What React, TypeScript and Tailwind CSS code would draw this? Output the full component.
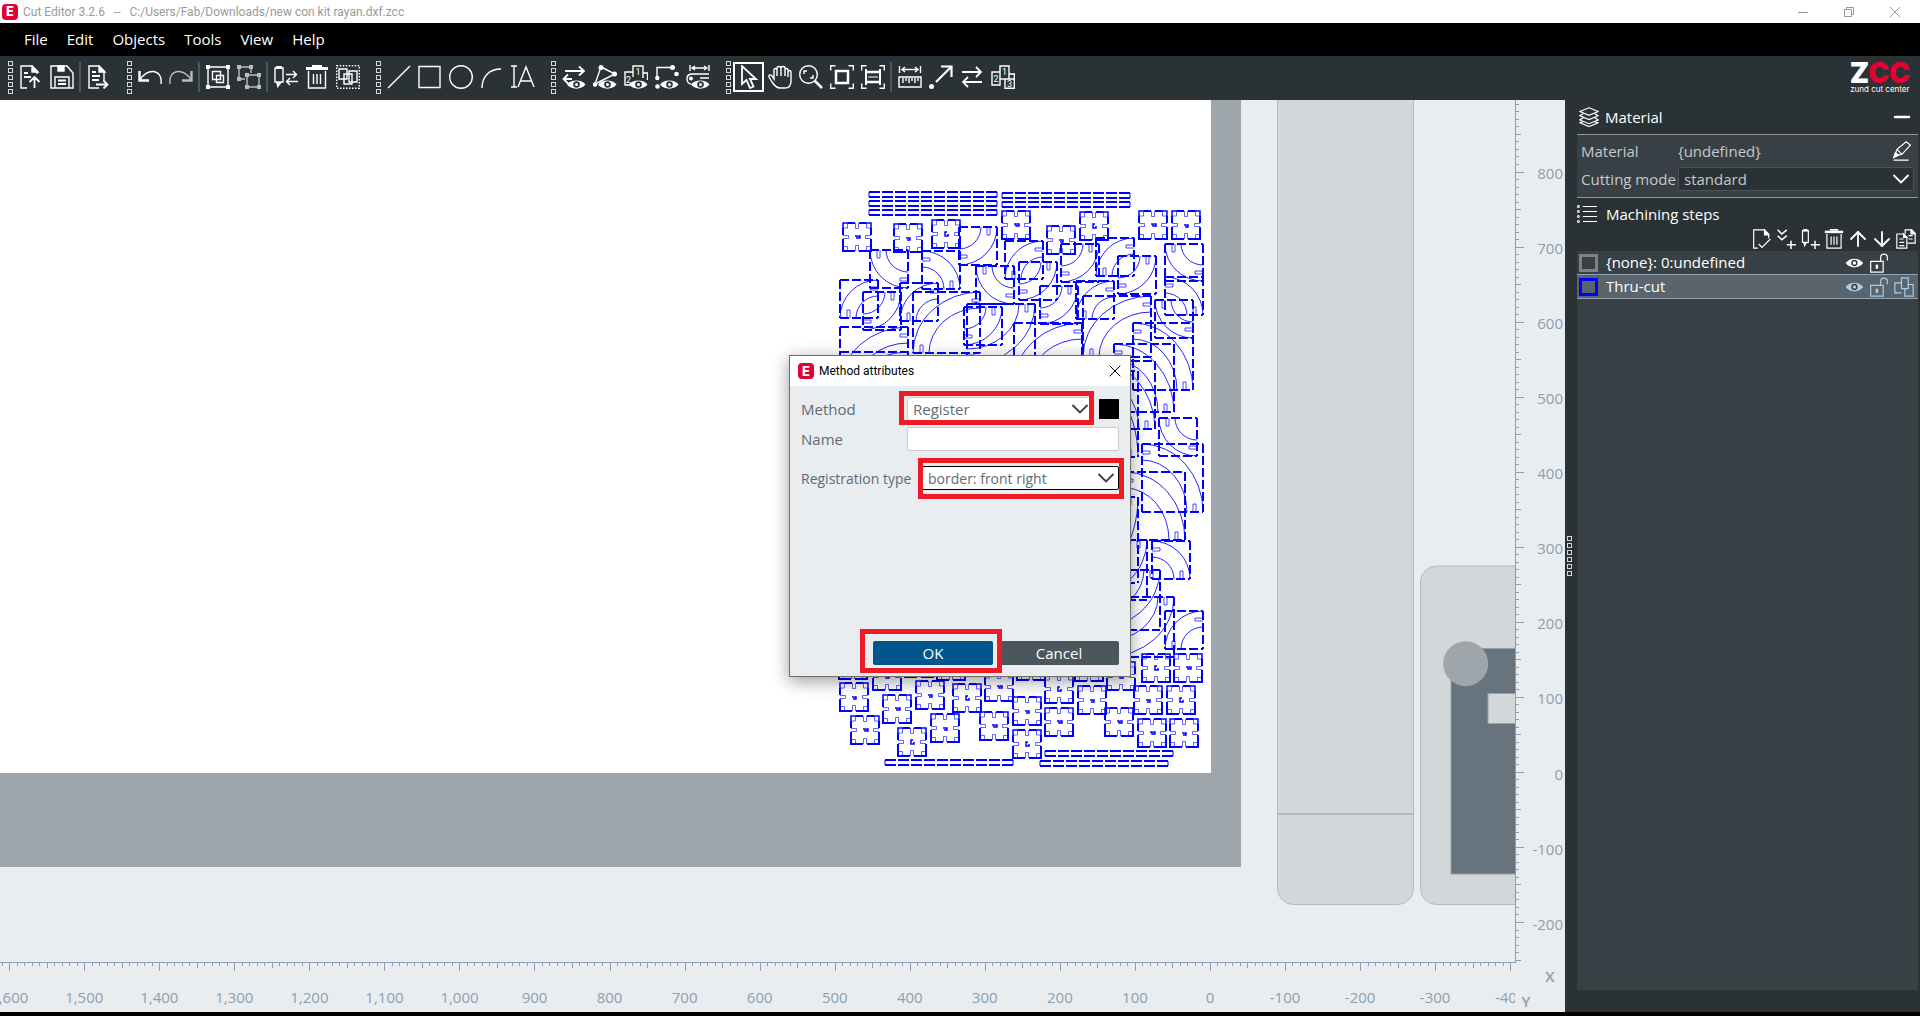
import React from 'react';
import { Minus, X, ArrowUp, ArrowDown } from 'lucide-react';

const BLUE = '#0000ff';

// ---------- icons ----------

interface IconProps {
  children: React.ReactNode;
  className?: string;
}

const Icon = ({ children, className = 'size-6' }: IconProps) => (
  <svg viewBox="0 0 24 24" className={className} fill="none" stroke="currentColor" strokeWidth={1.4} aria-hidden="true">
    {children}
  </svg>
);

const Chevron = ({ className }: { className: string }) => (
  <Icon className={`pointer-events-none absolute top-0 right-0 size-6 ${className}`}>
    <path d="M3.500 8L11 15.500L18.500 8" strokeWidth={1.8} />
  </Icon>
);

const Eye = () => (
  <g>
    <path d="M5 19.500C8.500 14 20 14 23.500 19.500C20 25 8.500 25 5 19.500Z" fill="currentColor" stroke="none" />
    <circle cx="14.500" cy="19.500" r="3.300" fill="#2b3235" stroke="none" />
    <circle cx="14.500" cy="19.500" r="1.500" fill="currentColor" stroke="none" />
  </g>
);

const Corners = () => <path d="M.700 5.500V.700H5.500M18.500 .700H23.300V5.500M23.300 18.500V23.300H18.500M5.500 23.300H.700V18.500" />;

const Trash = () => (
  <>
    <path d="M1 3.500H23" strokeWidth={3} />
    <path d="M7 1H17" strokeWidth={2} />
    <path d="M3.500 6V23H20.500V6" />
    <path d="M8.500 9V19M12 9V19M15.500 9V19" />
  </>
);

const icons = {
  open: (
    <>
      <path d="M8 23H2V1H13L18 6V9" />
      <path d="M13 1V7H19Z" fill="currentColor" />
      <path d="M5 8H9M5 12H12M15.500 23V12M10.500 17L15.500 12L20.500 17" strokeWidth={1.8} />
    </>
  ),
  save: (
    <>
      <path d="M1 1H17L23 8V23H1Z" />
      <path d="M8 1H14V6H8Z" fill="currentColor" />
      <path d="M5 23V12H19V23" />
      <path d="M8 15.500H16M8 19H16" strokeWidth={2} />
    </>
  ),
  exportDoc: (
    <>
      <path d="M12 23H2V1H12L17 6V16" />
      <path d="M12 1V7H18Z" fill="currentColor" />
      <path d="M5 7H9M5 11H13M5 15H12" strokeWidth={1.8} />
      <path d="M9 19.500H20M16.500 15.500L20.500 19.500L16.500 23.500" strokeWidth={1.8} />
    </>
  ),
  undo: (
    <>
      <path d="M2 15C8 3 25 3 23 19" />
      <path d="M1.500 6V15.500H11" strokeWidth={2.4} />
    </>
  ),
  redo: (
    <g stroke="#b9bec0">
      <path d="M22 15C16 3 -1 3 1 19" />
      <path d="M22.500 6V15.500H13" strokeWidth={2.4} />
    </g>
  ),
  group: (
    <>
      <path d="M2 2H22V22H2Z" />
      <path d="M0 0H4V4H0ZM20 0H24V4H20ZM0 20H4V24H0ZM20 20H24V24H20Z" fill="currentColor" stroke="none" />
      <path d="M6.500 6.500H14.500V14.500H6.500ZM10.500 10.500H17.500V17.500H10.500Z" />
    </>
  ),
  ungroup: (
    <g stroke="#b9bec0">
      <path d="M8 14H2V2H14V8M10 10H22V22H10Z" />
      <path d="M0 0H4V4H0ZM12 0H16V4H12ZM0 12H4V16H0ZM8 8H12V12H8ZM20 8H24V12H20ZM8 20H12V24H8ZM20 20H24V24H20Z" fill="#b9bec0" stroke="none" />
    </g>
  ),
  penSwap: (
    <>
      <path d="M1 3H9V17H1Z" />
      <path d="M2 1H8V4H2ZM2 17L3.500 23L8 17Z" fill="currentColor" stroke="none" />
      <path d="M12 9.500H22M19 6L22.500 9.500L19 13M24 16.500H13M16 13L12.500 16.500L16 20" />
    </>
  ),
  trash: <Trash />,
  select: (
    <>
      <path d="M.700 .700H23.300V23.300H.700Z" strokeDasharray="1.500 1.500" />
      <path d="M3 4H11V14H3ZM13 6H21V17H13ZM8 9H16V19H8Z" />
    </>
  ),
  line: <path d="M1 23L23 1" />,
  rect: <path d="M1 1.500H22V22.500H1Z" />,
  circle: <circle cx="12" cy="12" r="11.300" />,
  arc: <path d="M2 23C2 13 8 4 21 4" />,
  text: (
    <>
      <path d="M0 1H6M3 1V22M0 22H6" />
      <path d="M7 22L15 2L23 22M10 16H20" />
    </>
  ),
  viewDirection: (
    <>
      <path d="M3 6H22M17 1.500L22 6L17 10.500M10 14H2M6 9.500L1.500 14L6 18.500" strokeWidth={1.800} />
      <Eye />
    </>
  ),
  viewPoints: (
    <>
      <path d="M8 2L22 9L2 19Z" />
      <circle cx="8" cy="2.500" r="2.500" fill="currentColor" stroke="none" />
      <circle cx="21.500" cy="9" r="2.500" fill="currentColor" stroke="none" />
      <circle cx="2" cy="19.500" r="2.300" fill="currentColor" stroke="none" />
      <Eye />
    </>
  ),
  viewOrder: (
    <>
      <path d="M6 20H1V7H9M9 12V1H19V13M19 8H23.500V15" />
      <text x="2" y="18" fontSize="9" fill="currentColor" stroke="none" fontFamily="Roboto">2</text>
      <text x="11.500" y="10" fontSize="9" fill="currentColor" stroke="none" fontFamily="Roboto">1</text>
      <Eye />
    </>
  ),
  viewNodes: (
    <>
      <path d="M2 12V2.500H16" />
      <circle cx="2.300" cy="13" r="2.200" fill="currentColor" stroke="none" />
      <circle cx="17.500" cy="2.500" r="2.500" fill="currentColor" stroke="none" />
      <circle cx="21.500" cy="9" r="2.300" fill="currentColor" stroke="none" />
      <circle cx="2.500" cy="21.500" r="2.300" fill="currentColor" stroke="none" />
      <Eye />
    </>
  ),
  viewOffset: (
    <>
      <path d="M4 0V6M23 0V6M6 3H21M9 1L6 3L9 5M18 1L21 3L18 5" />
      <path d="M23 9H6C-1 9 0 18 5 19M14 13H23" />
      <circle cx="5" cy="13.500" r="2" fill="currentColor" stroke="none" />
      <Eye />
    </>
  ),
  pointer: <path d="M5 1V19L9.500 15L13 23L16.500 21.500L13 14H19Z" strokeWidth={1.800} />,
  hand: (
    <path d="M6 14V5C6 3 9 3 9 5V11V3C9 1 13 1 13 3V11V3C13 1 17 1 17 3V11V5C17 3 20 3 20 5V12V7C20 5 23 5 23 7V16C23 21 20 23 17 23H12C8 23 6 20 4 17L1 12C0 10 3 9 4 11Z" />
  ),
  magnifier: (
    <>
      <circle cx="9.500" cy="9.500" r="8.800" />
      <path d="M5 9V6H8M11 13H14V10" />
      <path d="M16 16L23 23" strokeWidth={2.500} />
    </>
  ),
  fitSheet: (
    <>
      <Corners />
      <path d="M6 6H18V18H6Z" strokeWidth={2.500} />
    </>
  ),
  fitWidth: (
    <>
      <Corners />
      <path d="M5 4V20M19 4V20" strokeWidth={2} />
      <path d="M5 7H19M5 17H19" strokeWidth={2.500} />
      <path d="M7 12H17" strokeWidth={1} />
    </>
  ),
  measure: (
    <>
      <path d="M1.500 1V8M22.500 1V8M4 4.500H20M7 2L4 4.500L7 7M17 2L20 4.500L17 7" />
      <path d="M1 12H23V22H1ZM5 13V18M8 13V16M11 13V18M14 13V16M17 13V18M20 13V16" />
    </>
  ),
  arrow: (
    <>
      <path d="M7 17L22 2M12 1.500H22.500V12" strokeWidth={2.200} />
      <circle cx="2.500" cy="21.500" r="2.500" fill="currentColor" stroke="none" />
    </>
  ),
  swap: <path d="M2 7H21M16 2L21 7L16 12M22 17H3M8 12L3 17L8 22" strokeWidth={1.800} />,
  order: (
    <>
      <path d="M9 20H1V7H9ZM9 1H18V14H9ZM14 14H23.300V23.300H14ZM18 9H23.300V14" />
      <text x="2.500" y="17" fontSize="9" fill="currentColor" stroke="none" fontFamily="Roboto">2</text>
      <text x="11" y="10" fontSize="9" fill="currentColor" stroke="none" fontFamily="Roboto">1</text>
      <text x="16" y="22" fontSize="9" fill="currentColor" stroke="none" fontFamily="Roboto">3</text>
    </>
  ),
};

type IconName = keyof typeof icons;
type ToolItem = IconName | 'grip' | 'sep';

const toolbar: ToolItem[] = [
  'grip', 'open', 'save', 'sep', 'exportDoc',
  'grip', 'undo', 'redo', 'sep', 'group', 'ungroup', 'sep', 'penSwap', 'trash', 'select',
  'grip', 'line', 'rect', 'circle', 'arc', 'text',
  'grip', 'viewDirection', 'viewPoints', 'viewOrder', 'viewNodes', 'viewOffset',
  'grip', 'pointer', 'hand', 'magnifier', 'fitSheet', 'fitWidth', 'sep', 'measure', 'arrow', 'swap', 'order',
];

const Grip = ({ count }: { count: number }) => (
  <span className="flex flex-col gap-[2px]">
    {Array.from({ length: count }, (_, i) => (
      <span key={i} className="h-[5px] w-[5px] border border-[#d5d8da]" />
    ))}
  </span>
);

const AppBadge = () => (
  <span className="flex size-4 items-center justify-center rounded-sm bg-[#e4002f] font-['Inter'] text-[13px] leading-none font-extrabold text-white">
    E
  </span>
);

// ---------- nesting ----------

type Corner = 'tl' | 'tr' | 'bl' | 'br';

const connectors: [number, number][] = [
  [843, 223], [894, 224], [932, 220], [1002, 211], [1047, 226], [1080, 212], [1139, 211], [1172, 211],
  [1142, 654], [1174, 654], [840, 683], [873, 662], [883, 695], [916, 681], [953, 684], [985, 673],
  [1013, 697], [1045, 675], [1045, 708], [1078, 686], [1107, 662], [1105, 708], [1134, 686], [1167, 686],
  [1138, 719], [1170, 719], [1013, 730], [980, 712], [931, 714], [898, 728], [851, 716],
  [937, 652], [1017, 652], [1075, 653], [839, 651], [905, 649],
];

const strips: [number, number, number][] = [
  [869, 192, 128], [869, 201, 128], [869, 210, 128], [1002, 193, 128], [1002, 202, 128],
  [885, 760, 128], [1045, 751, 128], [1040, 761, 128],
];

// x, y, width, height, corner holding the arc centre
const rings: [number, number, number, number, Corner][] = [
  [959, 227, 38, 38, 'tl'], [870, 250, 38, 38, 'tr'], [922, 251, 38, 38, 'bl'],
  [1005, 241, 38, 38, 'br'], [976, 266, 38, 38, 'tr'], [1019, 262, 38, 38, 'tl'],
  [1061, 244, 38, 38, 'tl'], [1096, 238, 38, 38, 'br'], [1118, 256, 38, 38, 'tl'],
  [1165, 244, 38, 37, 'tr'], [1165, 277, 38, 38, 'bl'], [840, 280, 38, 38, 'br'],
  [863, 292, 38, 38, 'tl'], [900, 283, 38, 38, 'br'], [964, 307, 38, 38, 'tl'],
  [1040, 286, 38, 38, 'tl'], [1076, 281, 38, 38, 'br'], [1155, 300, 38, 38, 'tr'],
  [913, 292, 67, 61, 'br'], [967, 304, 68, 61, 'tl'], [1083, 296, 68, 61, 'br'],
  [1133, 323, 60, 67, 'bl'], [1114, 344, 60, 68, 'bl'], [840, 327, 68, 61, 'br'],
  [1014, 323, 68, 61, 'br'], [1095, 361, 60, 68, 'bl'], [1078, 371, 60, 86, 'bl'],
  [840, 352, 68, 61, 'br'],
  [1159, 418, 38, 38, 'tr'], [1142, 444, 61, 68, 'bl'], [1125, 472, 60, 68, 'bl'],
  [1152, 541, 38, 38, 'bl'], [1078, 497, 60, 86, 'tl'], [1079, 540, 68, 60, 'tl'],
  [1092, 570, 68, 60, 'tl'], [1106, 597, 68, 60, 'tl'], [1165, 611, 38, 38, 'br'],
];

const Connector = ({ x, y, i }: { x: number; y: number; i: number }) => (
  <g transform={`translate(${x} ${y})`} fill="none" stroke={BLUE}>
    <path d="M5 0H12M16 0H23M28 5V12M28 16V28M29 28H16M12 28H-1M0 28V16M0 12V5" strokeWidth="2" />
    <path d="M0 5V0H5M23 0H28V5" strokeWidth="1.500" />
    <path
      strokeOpacity=".6"
      d="M12.500 0V5.500H15.500V0M12.500 28V22.500H15.500V28M0 12.500H5.500V15.500H0M28 12.500H22.500V15.500H28M0 5H4.500V0M23.500 0V5H28M0 23.500H4.500V28M23.500 28V23.500H28"
    />
    <path d={i % 3 === 0 ? 'M12 13H14V15H17V13H15' : i % 3 === 1 ? 'M12 14H16V16H13' : 'M15 12H13V16H16V14'} strokeWidth="1.500" />
  </g>
);

const Strip = ({ x, y, w }: { x: number; y: number; w: number }) => (
  <g fill="none" stroke={BLUE}>
    <path d={`M${x} ${y}H${x + w}M${x} ${y + 5}H${x + w}`} strokeWidth="2" strokeDasharray="11 2" />
    <path d={`M${x} ${y}V${y + 5}M${x + w} ${y}V${y + 5}`} strokeWidth="1" />
  </g>
);

// The arcs are drawn once around the top left corner and mirrored for the other three
const Ring = ({ x, y, w, h, corner }: { x: number; y: number; w: number; h: number; corner: Corner }) => {
  const fx = corner === 'tl' || corner === 'bl' ? 1 : -1;
  const fy = corner === 'tl' || corner === 'tr' ? 1 : -1;
  const ox = fx === 1 ? x : x + w;
  const oy = fy === 1 ? y : y + h;
  return (
    <g fill="none" stroke={BLUE}>
      <path d={`M${x} ${y}H${x + w}M${x} ${y + h}H${x + w}M${x} ${y}V${y + h}M${x + w} ${y}V${y + h}`} strokeWidth="2" strokeDasharray="9 3" />
      <g transform={`translate(${ox} ${oy}) scale(${fx} ${fy})`} strokeOpacity=".85">
        <path d={`M${w} 0A${w} ${h} 0 0 1 0 ${h}M${w - 16} 0A${w - 16} ${h - 16} 0 0 1 0 ${h - 16}`} />
        <path d={`M${w - 10} 0V8H${w - 7} V0M0 ${h - 10}H8V${h - 7}H0`} strokeOpacity=".7" />
      </g>
    </g>
  );
};

// ---------- workspace ----------

const STEP = 75.05;
const range = (from: number, to: number) => Array.from({ length: to - from + 1 }, (_, i) => from + i);
const tick = (n: number) => (n % 10 === 0 ? 8 : n % 5 === 0 ? 5 : 3);

const Rulers = () => (
  <g shapeRendering="crispEdges">
    <rect x="1515" y="100" width="50" height="912" fill="#e9edf0" />
    <rect x="0" y="962" width="1565" height="50" fill="#e9edf0" />
    <path d="M0 962.500H1515.500V100" fill="none" stroke="#8c9fb1" />
    {range(-40, 161).map((n) => {
      const x = 1210.4 - (n * STEP) / 10;
      return <path key={n} d={`M${x} 962V${963 + tick(n)}`} stroke="#8c9fb1" />;
    })}
    {range(-25, 89).map((n) => {
      const y = 772.4 - (n * STEP) / 10;
      return <path key={n} d={`M1515 ${y}H${1516 + tick(n)}`} stroke="#8c9fb1" />;
    })}
    <g fill="#8c9fb1" className="text-[15px]">
      <svg x="0" y="962" width="1515" height="50" viewBox="0 962 1515 50">
        {range(-4, 16).map((n) => (
          <text key={n} x={1210 - n * STEP} y="1003" textAnchor="middle">
            {(n * 100).toLocaleString('en-US')}
          </text>
        ))}
      </svg>
      {range(-2, 8).map((n) => (
        <text key={n} x="1563" y={779.5 - n * STEP} textAnchor="end">
          {n * 100}
        </text>
      ))}
      <text x="1550" y="982" textAnchor="middle" className="font-semibold">X</text>
      <text x="1526" y="1007" textAnchor="middle" className="font-semibold">Y</text>
    </g>
  </g>
);

const Canvas = () => (
  <svg viewBox="0 100 1565 912" preserveAspectRatio="xMaxYMin slice" className="absolute inset-0 h-full w-full">
    <rect x="0" y="100" width="1241" height="767" fill="#9ea6ac" />
    <rect x="0" y="100" width="1211" height="673" fill="#ffffff" />
    <g fill="#d2d7da" stroke="#b4babe">
      <rect x="1277.500" y="60" width="136" height="844.500" rx="16" />
      <path d="M1277 814H1414" strokeWidth="2" />
      <rect x="1420.500" y="566" width="160" height="338.500" rx="16" />
      <rect x="1451" y="648.500" width="100" height="225.500" fill="#68747d" stroke="#98a1a8" />
      <rect x="1488" y="693.500" width="60" height="30" stroke="#98a1a8" />
    </g>
    <circle cx="1465.700" cy="663.700" r="22.500" fill="#9ea6ac" />
    {strips.map(([x, y, w]) => (
      <Strip key={`${x}-${y}`} x={x} y={y} w={w} />
    ))}
    {rings.map(([x, y, w, h, corner]) => (
      <Ring key={`${x}-${y}`} x={x} y={y} w={w} h={h} corner={corner} />
    ))}
    {connectors.map(([x, y], i) => (
      <Connector key={`${x}-${y}`} x={x} y={y} i={i} />
    ))}
    <Rulers />
  </svg>
);

// ---------- dialog ----------

const MethodDialog = () => (
  <section
    role="dialog"
    aria-label="Method attributes"
    className="absolute top-[255px] right-[434px] flex h-[322px] w-[342px] flex-col border border-[#6e6e6e] bg-[#e9edf0] text-[15px] text-[#5f6b73] shadow-[0_4px_16px_rgba(0,0,0,0.4)]"
  >
    <header className="flex h-[30px] shrink-0 items-center gap-[5px] bg-white pr-[5px] pl-2">
      <AppBadge />
      <h2 className="font-['Roboto'] text-[12px] text-black">Method attributes</h2>
      <button aria-label="Close" className="ml-auto text-black">
        <X className="size-5" strokeWidth={1.2} />
      </button>
    </header>
    <form className="flex flex-1 flex-col px-[11px] pt-[11px] pb-[11px]">
      <div className="flex h-6 items-center">
        <label htmlFor="method" className="w-[106px]">Method</label>
        <div className="relative flex-1">
          <select id="method" className="h-6 w-full appearance-none rounded-xs border border-[#c9cdd0] bg-white pl-[5px]">
            <option>Register</option>
          </select>
          <Chevron className="text-[#384045]" />
        </div>
        <button type="button" aria-label="Colour" className="ml-[6px] size-5 bg-black" />
      </div>
      <div className="mt-[6px] flex h-6 items-center">
        <label htmlFor="name" className="w-[106px]">Name</label>
        <input id="name" className="h-6 min-w-0 flex-1 rounded-xs border border-[#c9cdd0] bg-white px-1" />
      </div>
      <div className="mt-[15px] flex h-6 items-center">
        <label htmlFor="registration" className="w-[121px] text-[14px] whitespace-nowrap">Registration type</label>
        <div className="relative flex-1">
          <select id="registration" className="h-6 w-full appearance-none rounded-xs border border-black bg-white pl-[5px] text-[14px]">
            <option>border: front right</option>
          </select>
          <Chevron className="text-[#384045]" />
        </div>
      </div>
      <div className="mt-auto flex justify-end gap-[6px] text-white">
        <button type="button" className="h-6 w-[120px] rounded-xs bg-[#00568c]">OK</button>
        <button type="button" className="h-6 w-[120px] rounded-xs bg-[#4b565d]">Cancel</button>
      </div>
    </form>
    <span className="pointer-events-none absolute top-[35px] left-[109px] h-[34px] w-[195px] border-5 border-[#ed1c24]" />
    <span className="pointer-events-none absolute top-[102px] left-[128px] h-[41px] w-[206px] border-5 border-[#ed1c24]" />
    <span className="pointer-events-none absolute top-[273px] left-[70px] h-[44px] w-[142px] border-5 border-[#ed1c24]" />
  </section>
);

// ---------- side panel ----------

const RowEye = () => (
  <Icon className="size-5">
    <path d="M2 12C7 5 18 5 23 12C18 19 7 19 2 12Z" fill="currentColor" stroke="none" />
    <circle cx="12.500" cy="12" r="3.800" fill="#384045" stroke="none" />
    <circle cx="12.500" cy="12" r="2" fill="currentColor" stroke="none" />
  </Icon>
);

const Unlock = () => (
  <Icon className="size-5">
    <path d="M2 10H17V23H2ZM14 10V5C14 0 22 0 22 5V9" />
    <path d="M9.500 14V19" strokeWidth={3} />
  </Icon>
);

const stepTools = [
  {
    label: 'New step',
    icon: <Icon className="size-5"><path d="M7 23H2V1H15L20 6V11M8 18L12 22L22 12" /><path d="M15 1V7H20Z" fill="currentColor" /></Icon>,
  },
  {
    label: 'Add below',
    icon: <Icon className="size-5"><path d="M2 1L7 6L13 1M2 8L7 13L13 8M18 14V24M13 19H24" strokeWidth={1.8} /></Icon>,
  },
  {
    label: 'Add tool',
    icon: <Icon className="size-5"><path d="M3 2H10V16H3Z" /><path d="M4 0H9V3H4ZM4 16L5 22L9 16Z" fill="currentColor" stroke="none" /><path d="M18 14V24M13 19H24" strokeWidth={1.8} /></Icon>,
  },
  { label: 'Delete', icon: <Icon className="size-5"><Trash /></Icon> },
  { label: 'Move up', icon: <ArrowUp className="size-6" strokeWidth={1.8} /> },
  { label: 'Move down', icon: <ArrowDown className="size-6" strokeWidth={1.8} /> },
  {
    label: 'Copy',
    icon: <Icon className="size-5"><path d="M1 6H9L13 10V23H1ZM11 6V1H19L23 5V17H14M4 12H9M4 16H10M4 20H10M15 8H20M15 12H20" /><path d="M9 6V10H13ZM18 1V6H23Z" fill="currentColor" /></Icon>,
  },
];

const SidePanel = () => (
  <aside className="mr-[2px] mb-[22px] flex w-[341px] shrink-0 flex-col bg-[#384045] text-[15px] text-[#c5c9cb]">
    <header className="flex h-[35px] shrink-0 items-center gap-[6px] border-b border-[#919699] bg-[#2b3235] pr-2 pl-[2px] text-white">
      <Icon className="size-5">
        <path d="M12 1L23 5.500L12 10L1 5.500ZM5 8L1 10.500L12 15L23 10.500L19 8M5 13L1 15.500L12 20L23 15.500L19 13" />
        <path d="M5 17.500L1 19L12 23.500L23 19L19 17.500" />
      </Icon>
      <h2>Material</h2>
      <button aria-label="Collapse" className="ml-auto">
        <Minus className="-mr-1 size-6" strokeWidth={2.5} />
      </button>
    </header>
    <div className="flex h-[63px] shrink-0 flex-col border-b border-[#919699] pl-1">
      <div className="flex h-8 items-center pr-[6px]">
        <span className="w-[97px]">Material</span>
        <span>{'{undefined}'}</span>
        <button aria-label="Edit material" className="ml-auto text-white">
          <Icon className="size-5">
            <path d="M3 18L6 10L17 1L22 5L12 16ZM6 10L12 16M2 23H20" />
            <path d="M2 20L4 14L8 17Z" fill="currentColor" />
          </Icon>
        </button>
      </div>
      <div className="flex h-6 items-center pr-1">
        <label htmlFor="cutting" className="w-[97px] whitespace-nowrap">Cutting mode</label>
        <div className="relative flex-1">
          <select id="cutting" className="h-6 w-full appearance-none rounded-xs border border-[#4b5358] bg-[#2b3235] pl-[5px]">
            <option>standard</option>
          </select>
          <Chevron className="text-white" />
        </div>
      </div>
    </div>
    <header className="flex h-8 shrink-0 items-center gap-[9px] bg-[#2b3235] text-white">
      <Icon className="size-5">
        <path d="M7 3H24M7 9H24M7 15H24M7 21H24" />
        <path d="M.700 2H2.700V4H.700ZM.700 8H2.700V10H.700ZM.700 14H2.700V16H.700ZM.700 20H2.700V22H.700Z" strokeWidth={1.200} />
      </Icon>
      <h2>Machining steps</h2>
    </header>
    <div className="flex h-[21px] shrink-0 items-end justify-end bg-[#2b3235] text-white">
      {stepTools.map((tool) => (
        <button key={tool.label} aria-label={tool.label} className="flex h-6 w-6 items-center justify-center">
          {tool.icon}
        </button>
      ))}
    </div>
    <ul className="flex flex-col text-white">
      <li className="flex h-[23px] items-center pr-1 pl-[2px]">
        <span className="h-[18px] w-[19px] border-3 border-[#808080]" />
        <span className="ml-2 flex-1">{'{none}: 0:undefined'}</span>
        <button aria-label="Visible"><RowEye /></button>
        <button aria-label="Unlocked" className="mr-[25px] ml-[5px]"><Unlock /></button>
      </li>
      <li className="flex h-[25px] items-center border-y border-[#8fa3b5] bg-[#5a646c] pr-1 pl-[2px]">
        <span className="h-[18px] w-[19px] border-3 border-[#0000ff]" />
        <span className="ml-2 flex-1">Thru-cut</span>
        <span className="flex items-center gap-[5px] text-[#a9cdec]">
          <button aria-label="Visible"><RowEye /></button>
          <button aria-label="Unlocked"><Unlock /></button>
          <button aria-label="Objects">
            <Icon className="size-5"><path d="M9 19H1V7H9M9 1H17V14H9ZM13 14V23H23V9H17" /></Icon>
          </button>
        </span>
      </li>
    </ul>
  </aside>
);

export default function App() {
  return (
    <div className="flex h-screen flex-col overflow-hidden bg-black font-['Open_Sans','Noto_Sans',sans-serif] text-[15px]">
      <header className="flex h-[23px] shrink-0 items-center bg-white pl-[2px] font-['Roboto'] text-[12px] text-[#999999]">
        <AppBadge />
        <h1 className="ml-[5px] whitespace-pre">{'Cut Editor 3.2.6   --   C:/Users/Fab/Downloads/new con kit rayan.dxf.zcc'}</h1>
        <div className="ml-auto flex gap-[34px] pr-[19px]">
          <button aria-label="Minimize"><svg className="size-3" viewBox="0 0 12 12" stroke="currentColor"><path d="M1 6.500H11" /></svg></button>
          <button aria-label="Restore"><svg className="size-3" viewBox="0 0 12 12" stroke="currentColor" fill="none"><path d="M1.500 3.500H8.500V10.500H1.500ZM3.500 3.500V1.500H10.500V8.500H8.500" /></svg></button>
          <button aria-label="Close"><svg className="size-3" viewBox="0 0 12 12" stroke="currentColor"><path d="M1 1L11 11M11 1L1 11" /></svg></button>
        </div>
      </header>
      <nav className="flex h-[33px] shrink-0 items-center gap-[19px] pl-6 text-white">
        {['File', 'Edit', 'Objects', 'Tools', 'View', 'Help'].map((item) => (
          <a key={item} href="#">{item}</a>
        ))}
      </nav>
      <div className="flex h-[44px] shrink-0 items-center bg-[#2b3235] pb-[2px] text-white">
        {toolbar.map((item, i) => {
          if (item === 'grip') {
            return <span key={i} className="mr-[2px] ml-[13px] first:ml-2"><Grip count={5} /></span>;
          }
          if (item === 'sep') {
            return <span key={i} className="mx-[2px] h-[30px] w-[2px] bg-[#4b565d]" />;
          }
          return (
            <button
              key={i}
              aria-label={item}
              className={`flex h-[30px] w-[31px] items-center justify-center ${item === 'pointer' ? 'border-2 border-white' : ''}`}
            >
              <Icon>{icons[item]}</Icon>
            </button>
          );
        })}
        <div className="mr-[10px] ml-auto flex flex-col items-center font-['Inter'] leading-none">
          <span className="text-[28px] leading-[23px] font-black">Z<span className="text-[#e4002f]">CC</span></span>
          <span className="text-[8px] leading-2 whitespace-nowrap">zund cut center</span>
        </div>
      </div>
      <main className="flex min-h-0 flex-1 bg-[#2b3235]">
        <div className="relative flex-1 overflow-hidden bg-[#e9edf0]">
          <Canvas />
          <MethodDialog />
        </div>
        <div className="flex w-3 shrink-0 items-center justify-start pl-[2px]">
          <Grip count={6} />
        </div>
        <SidePanel />
      </main>
      <div className="h-1 shrink-0" />
    </div>
  );
}
